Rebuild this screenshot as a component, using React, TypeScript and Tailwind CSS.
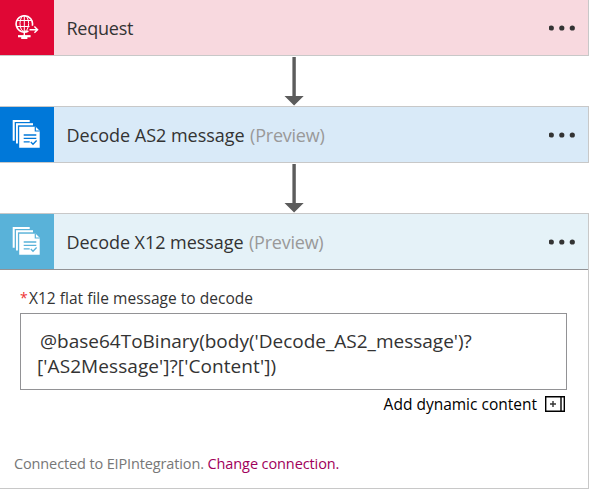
import type { ReactNode } from 'react';

function GlobeIcon() {
  return (
    <svg width="24" height="28" viewBox="0 0 24 28" fill="none" stroke="#fff" strokeWidth="1">
      <path d="M13.4 17A8.2 8.2 0 1 1 17.3 11.8" strokeWidth="1.6" />
      <ellipse cx="9.3" cy="9.5" rx="4.3" ry="8" />
      <path d="M1.5 6.5h15.6M1.5 12.5h13M9.3 1.5v16" />
      <path d="M14.5 15.7h8M19.4 12.6l3.2 3.1-3.2 3.1" strokeWidth="1.4" />
      <path d="M9.3 18v4" strokeWidth="1.4" />
      <path d="M3 22.2h12.6" strokeWidth="2.2" />
      <path d="M6.2 24h6.2" strokeWidth="2" />
    </svg>
  );
}

function DocumentsIcon({ color }: { color: string }) {
  return (
    <svg width="28" height="29" viewBox="0 0 28 29">
      <path d="M.7 0h17v20.7h-17z" fill="#fff" />
      <path d="M2.7 1.9h18v21h-18z" fill={color} />
      <path d="M4 3.2h17v20.3H4z" fill="#fff" />
      <path d="M5.9 5.3h18v20h-18z" fill={color} />
      <path d="M7.2 6.8h16.5l4 4v17H7.2z" fill="#fff" />
      <path d="M23.3 6.8V11h4.4" fill="none" stroke={color} strokeWidth="1.2" />
      <path d="M11.7 15h12.6M11.7 18.4h12.6M11.7 21.8h6M18.8 22l2.2 2.2 3.6-3.7" fill="none" stroke={color} strokeWidth="1.3" />
    </svg>
  );
}

function Dots() {
  return (
    <svg className="mr-[13.5px]" width="26" height="6" viewBox="0 0 26 6" fill="#333">
      <circle cx="2.3" cy="3" r="2.6" />
      <circle cx="12.8" cy="3" r="2.6" />
      <circle cx="23.3" cy="3" r="2.6" />
    </svg>
  );
}

function Arrow() {
  return (
    <svg className="ml-[284px] block" width="20" height="50" viewBox="0 0 20 50" fill="#5c5c5c">
      <path d="M8.4 1h3.4v38.9h7.9L10.1 49.5.5 39.9h7.9z" />
    </svg>
  );
}

function Header({ icon, iconBg, bg, children }: { icon: ReactNode; iconBg: string; bg: string; children: ReactNode }) {
  return (
    <div className={`flex h-[55px] items-center ${bg}`}>
      <div className={`flex h-full w-[54px] shrink-0 items-center pl-3 ${iconBg}`}>{icon}</div>
      <div className="flex-1 whitespace-pre pl-[12.5px] pt-px text-[18px] leading-6">{children}</div>
      <Dots />
    </div>
  );
}

export default function App() {
  return (
    <main className="h-[491px] w-[589px] overflow-hidden bg-white font-['Open_Sans','Noto_Sans',sans-serif] text-[#333]">
      <section className="border-b border-r border-[#c8c8c8]">
        <Header icon={<div className="pl-[3px]"><GlobeIcon /></div>} iconBg="bg-[#e00735]" bg="bg-[#f8d9df]">
          <span className="tracking-[-0.25px]">Request</span>
        </Header>
      </section>
      <Arrow />
      <section className="border-y border-r border-[#c8c8c8]">
        <Header icon={<DocumentsIcon color="#0078d9" />} iconBg="bg-[#0078d9]" bg="bg-[#d9eaf8]">
          <span className="tracking-[-0.02px]">Decode AS2 message</span>
          <span className="ml-px tracking-[-0.22px] text-[#999]"> (Preview)</span>
        </Header>
      </section>
      <Arrow />
      <section className="h-[276px] border-y border-r border-[#c8c8c8]">
        <Header icon={<DocumentsIcon color="#59b2d9" />} iconBg="bg-[#59b2d9]" bg="bg-[#e5f2f8]">
          <span className="tracking-[-0.05px]">Decode X12 message</span>
          <span className="ml-px tracking-[-0.22px] text-[#999]"> (Preview)</span>
        </Header>
        <div className="border-t border-[#929295] pl-5 pr-[21px] pt-[18px]">
          <label className="flex h-5 items-center gap-[2px] text-[15.5px] leading-5">
            <span className="w-[7px] text-[14px] text-[#e33]">*</span>
            <span className="tracking-[0.02px]">X12 flat file message to decode</span>
          </label>
          <div className="mt-[5px] h-[77px] whitespace-pre border border-[#929295] pl-4 pt-[15px] text-[19px] leading-[25px]">
            <div className="pl-[3px]">@base64ToBinary(body('Decode_AS2_message')?</div>
            <div className="tracking-[0.08px]">['AS2Message']?['Content'])</div>
          </div>
          <div className="mt-1 flex h-5 items-center justify-end gap-2 pr-[2px] text-[15.5px] leading-5 text-black">
            <span className="-mt-px">Add dynamic content</span>
            <svg width="20" height="16" viewBox="0 0 20 16" fill="none" stroke="#000">
              <path d="M.7.7h18.6v14.6H.7zM16 0v16" strokeWidth="1.4" />
              <path d="M5 8h6M8 5v6" strokeWidth="1.4" stroke="#333" />
            </svg>
          </div>
        </div>
        <div className="mt-10 whitespace-pre pl-[14px] text-[14.5px] leading-5 text-[#777]">
          <span className="tracking-[-0.13px]">Connected to EIPIntegration. </span>
          <span className="tracking-[-0.1px] text-[#a0005a]">Change connection.</span>
        </div>
      </section>
    </main>
  );
}
